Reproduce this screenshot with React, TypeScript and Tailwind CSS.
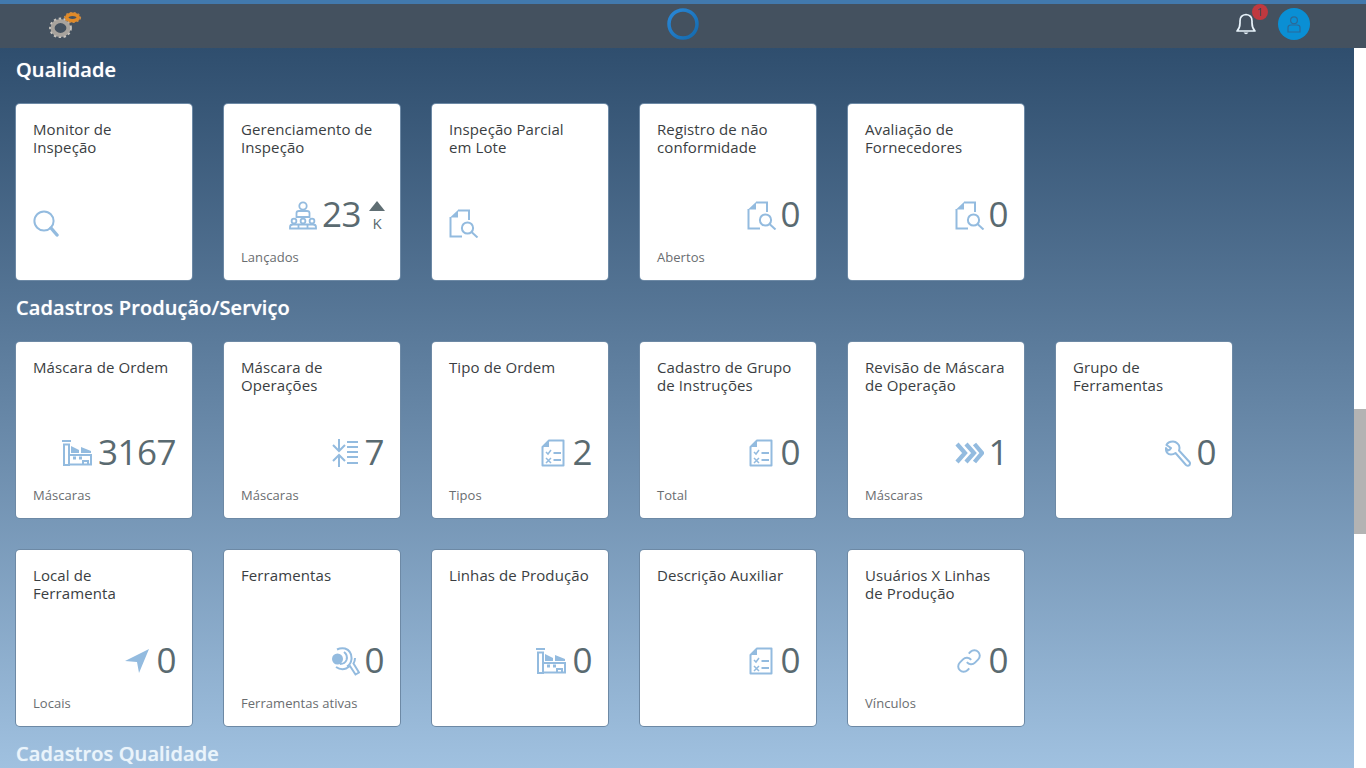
import React from "react";

const C = "#93bbdf";
const s = { fill: "none", stroke: C, strokeWidth: 2 } as const;

const Search = () => (
  <svg width="26" height="27" viewBox="0 0 26 27" {...s}>
    <circle cx="11" cy="11" r="9.6" />
    <path d="M18 18 L24 25" strokeWidth="3.4" strokeLinecap="round" />
  </svg>
);
const DocSearch = () => (
  <svg width="30" height="29" viewBox="0 0 30 29" {...s} className="-mr-[1px]">
    <path d="M9 1.5 H20 V11" />
    <path d="M1.5 8 V27.5 H13" />
    <path d="M1 8.5 L9 1 V8.5 Z" fill={C} stroke="none" />
    <circle cx="18.5" cy="19" r="5.6" />
    <path d="M22.5 23 L28.5 28.5" />
  </svg>
);
const Group = () => (
  <svg width="28" height="29" viewBox="0 0 28 29" {...s} strokeWidth="1.8" className="mr-[1px]">
    <circle cx="14" cy="5" r="3.7" />
    <path d="M7.5 16 V12 Q7.5 10 10 10 H18 Q20.5 10 20.5 12 V16 Z" />
    <circle cx="5" cy="20" r="2.4" />
    <circle cx="14" cy="20" r="2.4" />
    <circle cx="23" cy="20" r="2.4" />
    <path d="M1 27.5 V26 Q1 23.5 4 23.5 H24 Q27 23.5 27 26 V27.5 Z" />
    <path d="M9.5 24 V27 M18.5 24 V27" />
  </svg>
);
const Factory = () => (
  <svg width="30" height="26" viewBox="0 0 30 26" {...s} className="mr-[2px]">
    <path d="M0 1 H9" />
    <path d="M2 4.5 H7 V25 H2 Z" />
    <path d="M7 24.5 H29 V15 H7" />
    <path d="M9 6 L17 10 V13 H9 Z M19 7 L29 11 V13 H19 Z" fill={C} stroke="none" />
    <path d="M11 18 H14 M17 18 H20" strokeWidth="3" />
    <path d="M21 25 V21 H26 V25" />
  </svg>
);
const Checklist = () => (
  <svg width="24" height="28" viewBox="0 0 24 28" {...s} className="mr-[3px]">
    <path d="M8 1.5 H22.5 V26.5 H1.5 V8 Z" strokeLinejoin="round" />
    <path d="M1.5 8 L8 1.5 V8 Z" fill={C} stroke="none" />
    <path d="M5 13 L7 15 L10 11" strokeWidth="1.5" />
    <path d="M5 19 L10 24 M10 19 L5 24" strokeWidth="1.5" />
    <path d="M12.5 14 H20 M12.5 21 H20" strokeWidth="1.8" />
  </svg>
);
const Compress = () => (
  <svg width="26" height="28" viewBox="0 0 26 28" {...s} className="mr-[2px]">
    <path d="M7 0 V11 M1 6 L7 12 L13 6" />
    <path d="M7 28 V16 M1 22 L7 16 L13 22" />
    <path d="M15 3 H26 M15 8 H26 M15 13 H26 M15 18 H26 M15 24 H26" />
  </svg>
);
const Chevrons = () => (
  <svg width="29" height="22" viewBox="0 0 29 22" fill="none" stroke={C} strokeWidth="4.2">
    <path d="M2 2 L10 11 L2 20 M11 2 L19 11 L11 20 M19.5 2 L27 11 L19.5 20" />
  </svg>
);
const Wrench = () => (
  <svg width="26" height="27" viewBox="0 0 26 27" {...s} className="mr-[1px]">
    <path d="M8 1.5 Q3 1.5 1.5 5 L6 8 Q5 10 3 10.5 L1 8 Q0.5 14 6 14.5 Q8.5 14.5 10.5 13 L21 25 Q23 26.5 24.5 25 Q25.5 23 24.5 22 L14 10.5 Q15.5 6 12.5 3.5 Q10.5 1.5 8 1.5 Z" strokeLinejoin="round" />
  </svg>
);
const Navigate = () => (
  <svg width="25" height="24" viewBox="0 0 25 24" className="mr-[2px]">
    <path d="M0 12 L24 0 L14 24 L12 13 Z" fill={C} />
  </svg>
);
const ToolSearch = () => (
  <svg width="29" height="29" viewBox="0 0 29 29" {...s}>
    <circle cx="6.5" cy="12" r="5.5" fill={C} stroke="none" />
    <path d="M6 2.5 Q10 0.5 14 1.5 Q21 4 20.5 12 Q20 17 16 19.5" />
    <path d="M5 20 Q10 23.5 15 21.5 L19 19 L24.5 27.5 L28 25.5 L22.5 16.5 Q24 14 24 11" />
    <path d="M13 5 Q17 8 15.5 13 Q14 17 9 17" />
  </svg>
);
const LinkIcon = () => (
  <svg width="26" height="26" viewBox="0 0 24 24" fill="none" stroke={C} strokeWidth="1.8" className="mr-[2px]">
    <path d="M10 13a5 5 0 0 0 7.54.54l3-3a5 5 0 0 0-7.07-7.07l-1.72 1.71" />
    <path d="M14 11a5 5 0 0 0-7.54-.54l-3 3a5 5 0 0 0 7.07 7.07l1.71-1.71" />
  </svg>
);

type T = {
  title: string[];
  icon: React.ReactNode;
  n?: string;
  foot?: string;
  k?: boolean;
};

const Tile = ({ title, icon, n, foot, k }: T) => (
  <div className="w-[176px] h-[176px] shrink-0 bg-white rounded-[4px] shadow-[0_0_0_1px_#6d89a5] flex flex-col pl-[17px] pr-[16px] pt-[16px] pb-[15px]">
    <div className="text-[15px] leading-[18px] tracking-[0.1px] text-[#3a3e42]">
      {title.map((t) => (
        <div key={t} className="whitespace-nowrap">{t}</div>
      ))}
    </div>
    <div className={`mt-auto h-[44px] flex items-center ${n ? "justify-end" : "justify-start"}`}>
      <div className={`flex ${n ? "" : "mt-[16px]"}`}>{icon}</div>
      {n && <span className="ml-[4px] -mt-[2px] text-[35px] leading-[44px] tracking-[-0.5px] text-[#5a6a70]">{n}</span>}
      {k && (
        <div className="ml-2 w-4 flex flex-col items-center text-[#5a6a70] mt-[2px] -mr-[1px]">
          <div className="w-0 h-0 border-x-[8px] border-x-transparent border-b-[10px] border-b-[#5f6e73]" />
          <span className="text-[15px] leading-[18px] mt-[3px]">K</span>
        </div>
      )}
    </div>
    <div className="mt-[12px] h-[16px] text-[13px] leading-[16px] tracking-[0.05px] text-[#6a6d70]">{foot}</div>
  </div>
);

const H = ({ children, cls }: { children: string; cls: string }) => (
  <h2 className={`text-[20px] leading-[28px] font-semibold tracking-[0.1px] [text-shadow:0_0_1px_rgba(255,255,255,0.6)] ${cls}`}>{children}</h2>
);

export default function App() {
  return (
    <div className="w-[1366px] h-[768px] overflow-hidden flex flex-col bg-white font-['Open_Sans','Liberation_Sans',sans-serif]">
      <header className="h-[48px] shrink-0 border-t-4 border-t-[#4279ad] pb-1 bg-[#44515f] grid grid-cols-3 items-center">
        <div className="pl-[48px]">
          <svg width="34" height="28" viewBox="0 0 34 28" className="block blur-[0.5px]">
            <ellipse cx="12.5" cy="18" rx="8" ry="7" fill="none" stroke="#a8a39d" strokeWidth="4.2" />
            <ellipse cx="12.5" cy="18" rx="10.5" ry="9.5" fill="none" stroke="#c9c5bf" strokeWidth="1.8" strokeDasharray="2.5 2.5" />
            <ellipse cx="24.5" cy="7.5" rx="5.8" ry="3.2" fill="none" stroke="#e08a28" strokeWidth="3.6" />
            <ellipse cx="24.5" cy="7.5" rx="8" ry="5" fill="none" stroke="#c98a45" strokeWidth="1.2" strokeDasharray="2 2" />
          </svg>
        </div>
        <div className="flex justify-center">
          <svg width="32" height="32" viewBox="0 0 32 32" className="blur-[0.4px]">
            <defs>
              <linearGradient id="ring" x1="0" y1="0" x2="1" y2="1">
                <stop offset="0" stopColor="#2a88d8" />
                <stop offset="1" stopColor="#146aae" />
              </linearGradient>
            </defs>
            <circle cx="16" cy="16" r="14" fill="none" stroke="url(#ring)" strokeWidth="3.5" />
          </svg>
        </div>
        <div className="flex justify-end items-center pr-[56px]">
          <div className="relative w-[20px] h-[22px] mr-[22px]">
            <svg width="20" height="23" viewBox="0 0 20 23" fill="none" stroke="#e8f3fb" strokeWidth="1.7">
              <path d="M1 18 Q4 15 4 10 V8 Q4 2 10 1.5 Q16 2 16 8 V10 Q16 15 19 18 Z" strokeLinejoin="round" />
              <path d="M7.5 19.5 Q10 23 12.5 19.5 Z" fill="#e8f3fb" stroke="none" />
            </svg>
            <span className="absolute left-[16px] top-[-9px] w-4 h-4 rounded-full bg-[#c0393f] text-[#33475b] text-[11px] leading-[16px] text-center">1</span>
          </div>
          <div className="w-8 h-8 rounded-full bg-[#0a8fd4] flex items-center justify-center">
            <svg width="14" height="17" viewBox="0 0 14 17" fill="none" stroke="#2b6a99" strokeWidth="1.2">
              <circle cx="7" cy="4.2" r="3.4" />
              <path d="M1 16 V11.5 Q1 9 4 9 H10 Q13 9 13 11.5 V16 Z" />
            </svg>
          </div>
        </div>
      </header>
      <div className="flex-1 flex min-h-0">
        <main className="w-[1354px] pl-4 pt-2 bg-gradient-to-b from-[#2f4e6e] to-[#a0c1e0] overflow-hidden">
          <H cls="text-white">Qualidade</H>
          <div className="flex gap-8 mt-[20px]">
            <Tile title={["Monitor de", "Inspeção"]} icon={<Search />} />
            <Tile title={["Gerenciamento de", "Inspeção"]} icon={<Group />} n="23" k foot="Lançados" />
            <Tile title={["Inspeção Parcial", "em Lote"]} icon={<DocSearch />} />
            <Tile title={["Registro de não", "conformidade"]} icon={<DocSearch />} n="0" foot="Abertos" />
            <Tile title={["Avaliação de", "Fornecedores"]} icon={<DocSearch />} n="0" />
          </div>
          <div className="mt-[14px]"><H cls="text-white">Cadastros Produção/Serviço</H></div>
          <div className="flex gap-8 mt-[20px]">
            <Tile title={["Máscara de Ordem"]} icon={<Factory />} n="3167" foot="Máscaras" />
            <Tile title={["Máscara de", "Operações"]} icon={<Compress />} n="7" foot="Máscaras" />
            <Tile title={["Tipo de Ordem"]} icon={<Checklist />} n="2" foot="Tipos" />
            <Tile title={["Cadastro de Grupo", "de Instruções"]} icon={<Checklist />} n="0" foot="Total" />
            <Tile title={["Revisão de Máscara", "de Operação"]} icon={<Chevrons />} n="1" foot="Máscaras" />
            <Tile title={["Grupo de", "Ferramentas"]} icon={<Wrench />} n="0" />
          </div>
          <div className="flex gap-8 mt-8">
            <Tile title={["Local de", "Ferramenta"]} icon={<Navigate />} n="0" foot="Locais" />
            <Tile title={["Ferramentas"]} icon={<ToolSearch />} n="0" foot="Ferramentas ativas" />
            <Tile title={["Linhas de Produção"]} icon={<Factory />} n="0" />
            <Tile title={["Descrição Auxiliar"]} icon={<Checklist />} n="0" />
            <Tile title={["Usuários X Linhas", "de Produção"]} icon={<LinkIcon />} n="0" foot="Vínculos" />
          </div>
          <div className="mt-[14px]"><H cls="text-[#eaf4fb]">Cadastros Qualidade</H></div>
        </main>
        <div className="w-3 bg-white">
          <div className="mt-[361px] h-[125px] bg-[#b3b3b3]" />
        </div>
      </div>
    </div>
  );
}
